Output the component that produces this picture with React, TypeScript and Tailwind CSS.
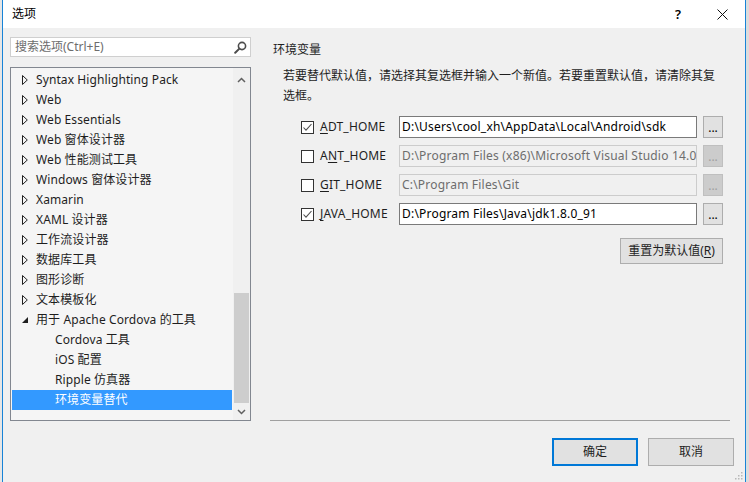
import React from "react";

const font = { fontFamily: '"Noto Sans", "Noto Sans CJK SC", sans-serif' };

function Collapsed() {
  return (
    <svg width="6" height="10" viewBox="0 0 6 10" className="shrink-0">
      <polygon points="0.5,0.5 5.3,5 0.5,9.5" fill="none" stroke="#1e1e1e" strokeWidth="1" />
    </svg>
  );
}

function Expanded() {
  return (
    <svg width="6" height="10" viewBox="0 0 6 10" className="shrink-0">
      <polygon points="6,2 6,8 0,8" fill="#1e1e1e" />
    </svg>
  );
}

type Node = { label: string; level: 0 | 1; open?: boolean; selected?: boolean };

const tree: Node[] = [
  { label: "Syntax Highlighting Pack", level: 0 },
  { label: "Web", level: 0 },
  { label: "Web Essentials", level: 0 },
  { label: "Web 窗体设计器", level: 0 },
  { label: "Web 性能测试工具", level: 0 },
  { label: "Windows 窗体设计器", level: 0 },
  { label: "Xamarin", level: 0 },
  { label: "XAML 设计器", level: 0 },
  { label: "工作流设计器", level: 0 },
  { label: "数据库工具", level: 0 },
  { label: "图形诊断", level: 0 },
  { label: "文本模板化", level: 0 },
  { label: "用于 Apache Cordova 的工具", level: 0, open: true },
  { label: "Cordova 工具", level: 1 },
  { label: "iOS 配置", level: 1 },
  { label: "Ripple 仿真器", level: 1 },
  { label: "环境变量替代", level: 1, selected: true },
];

type EnvRow = { pre: string; key: string; post: string; value: string; on: boolean };

const envRows: EnvRow[] = [
  { pre: "", key: "A", post: "DT_HOME", value: "D:\\Users\\cool_xh\\AppData\\Local\\Android\\sdk", on: true },
  { pre: "A", key: "N", post: "T_HOME", value: "D:\\Program Files (x86)\\Microsoft Visual Studio 14.0", on: false },
  { pre: "", key: "G", post: "IT_HOME", value: "C:\\Program Files\\Git", on: false },
  { pre: "", key: "J", post: "AVA_HOME", value: "D:\\Program Files\\Java\\jdk1.8.0_91", on: true },
];

function Checkbox({ checked }: { checked: boolean }) {
  return (
    <div className="w-[13px] h-[13px] border border-[#333333] bg-white flex items-center justify-center shrink-0">
      {checked && (
        <svg width="11" height="11" viewBox="0 0 11 11">
          <polyline points="1.5,5.5 4,8.2 9.5,2" fill="none" stroke="#505050" strokeWidth="1.1" />
        </svg>
      )}
    </div>
  );
}

export default function App() {
  return (
    <div className="w-[749px] h-[482px] flex bg-[#dedede] overflow-hidden text-[12px] text-[#1e1e1e]" style={font}>
      <div className="w-[2px] bg-[#e6e6e6]" />
      <div className="relative w-[744px] h-full border-x border-[#1883d7] bg-[#f0f0f0] flex flex-col">
        {/* title bar */}
        <div className="h-[28px] bg-white flex items-center pl-[9px] shrink-0">
          <span className="text-[12px] text-black">选项</span>
          <span className="ml-auto mr-[36px] text-[13px] text-black font-semibold leading-none">?</span>
          <svg width="11" height="11" viewBox="0 0 11 11" className="mr-[17px]">
            <path d="M0.5,0.5 L10.5,10.5 M10.5,0.5 L0.5,10.5" stroke="#111" strokeWidth="1" />
          </svg>
        </div>

        <div className="flex flex-1 pl-[7px]">
          {/* left column */}
          <div className="w-[241px] flex flex-col pt-[9px]">
            <div className="h-[20px] bg-white border border-[#cfcfcf] flex items-center pl-[4px] pr-[3px]">
              <span className="text-[#6d6d6d]">搜索选项(Ctrl+E)</span>
              <svg width="13" height="13" viewBox="0 0 13 13" className="ml-auto">
                <circle cx="8" cy="5" r="3.6" fill="none" stroke="#4d4d4d" strokeWidth="1.6" />
                <path d="M5.4,7.6 L1.2,11.8" stroke="#4d4d4d" strokeWidth="2" strokeLinecap="round" />
              </svg>
            </div>

            <div className="mt-[10px] h-[354px] border border-[#828790] bg-[#f5f5f5] flex">
              <div className="flex-1 pt-[2px] pl-[1px]">
                {tree.map((n) => (
                  <div
                    key={n.label}
                    className={`h-[20px] flex items-center whitespace-nowrap ${n.selected ? "bg-[#3399ff] text-white" : ""}`}
                  >
                    {n.level === 0 ? (
                      <>
                        <div className="w-[10px]" />
                        {n.open ? <Expanded /> : <Collapsed />}
                        <span className="ml-[8px] tracking-[0.1px]">{n.label}</span>
                      </>
                    ) : (
                      <span className="ml-[43px] tracking-[0.1px]">{n.label}</span>
                    )}
                  </div>
                ))}
              </div>
              <div className="w-[17px] ml-[1px] bg-[#f0f0f0] flex flex-col items-center">
                <div className="h-[17px] w-full flex items-center justify-center mt-[3px]">
                  <svg width="9" height="6" viewBox="0 0 9 6">
                    <polyline points="1,5 4.5,1.5 8,5" fill="none" stroke="#606060" strokeWidth="1.5" />
                  </svg>
                </div>
                <div className="flex-1" />
                <div className="w-[15px] h-[110px] bg-[#cdcdcd]" />
                <div className="h-[17px] w-full flex items-center justify-center">
                  <svg width="9" height="6" viewBox="0 0 9 6">
                    <polyline points="1,1 4.5,4.5 8,1" fill="none" stroke="#606060" strokeWidth="1.5" />
                  </svg>
                </div>
              </div>
            </div>
          </div>

          {/* right column */}
          <div className="w-[462px] ml-[19px] flex flex-col">
            <div className="h-[392px] pt-[12px]">
              <div className="h-[20px] leading-[20px] pl-[3px]">环境变量</div>
              <p className="mt-[6px] pl-[13px] leading-[20px]">
                若要替代默认值，请选择其复选框并输入一个新值。若要重置默认值，请清除其复
                <br />
                选框。
              </p>

              <div className="mt-[10px] pl-[31px] pr-[9px] flex flex-col gap-[7px]">
                {envRows.map((r) => (
                  <div key={r.post} className="h-[22px] flex items-center">
                    <Checkbox checked={r.on} />
                    <span className="ml-[6px] w-[79px] whitespace-nowrap tracking-[0.2px]">
                      {r.pre}
                      <span className="underline underline-offset-2">{r.key}</span>
                      {r.post}
                    </span>
                    <div
                      className={`w-[298px] h-[22px] flex items-center pl-[2px] overflow-hidden whitespace-nowrap tracking-[0.2px] border ${
                        r.on ? "bg-white border-[#7a7a7a] text-black" : "bg-[#f0f0f0] border-[#cccccc] text-[#6d6d6d]"
                      }`}
                    >
                      {r.value}
                    </div>
                    <div
                      className={`ml-[6px] w-[20px] h-[22px] flex items-end justify-center pb-[3px] leading-none border ${
                        r.on ? "bg-[#e1e1e1] border-[#adadad] text-black" : "bg-[#cccccc] border-[#bfbfbf] text-[#a0a0a0]"
                      }`}
                    >
                      ...
                    </div>
                  </div>
                ))}
                <div className="mt-[6px] flex">
                  <div className="ml-auto w-[103px] h-[26px] bg-[#e1e1e1] border border-[#adadad] flex items-center justify-center">
                    重置为默认值(<span className="underline underline-offset-2">R</span>)
                  </div>
                </div>
              </div>
            </div>

            <div className="h-[1px] bg-[#a0a0a0] mr-[2px]" />

            <div className="mt-[17px] -mr-[2px] flex justify-end gap-[10px]">
              <div className="w-[86px] h-[28px] bg-[#e1e1e1] border-2 border-[#0078d7] flex items-center justify-center">
                确定
              </div>
              <div className="w-[86px] h-[28px] bg-[#e1e1e1] border border-[#adadad] flex items-center justify-center">
                取消
              </div>
            </div>
          </div>
        </div>

        {/* size grip */}
        <svg width="9" height="9" viewBox="0 0 9 9" className="absolute right-[2px] bottom-[2px]">
          {[
            [7, 1],
            [7, 4],
            [4, 4],
            [7, 7],
            [4, 7],
            [1, 7],
          ].map(([x, y]) => (
            <rect key={`${x}-${y}`} x={x} y={y} width="1.5" height="1.5" fill="#b8b8b8" />
          ))}
        </svg>
      </div>
      <div className="flex-1 bg-[#dcdcdc]" />
    </div>
  );
}
